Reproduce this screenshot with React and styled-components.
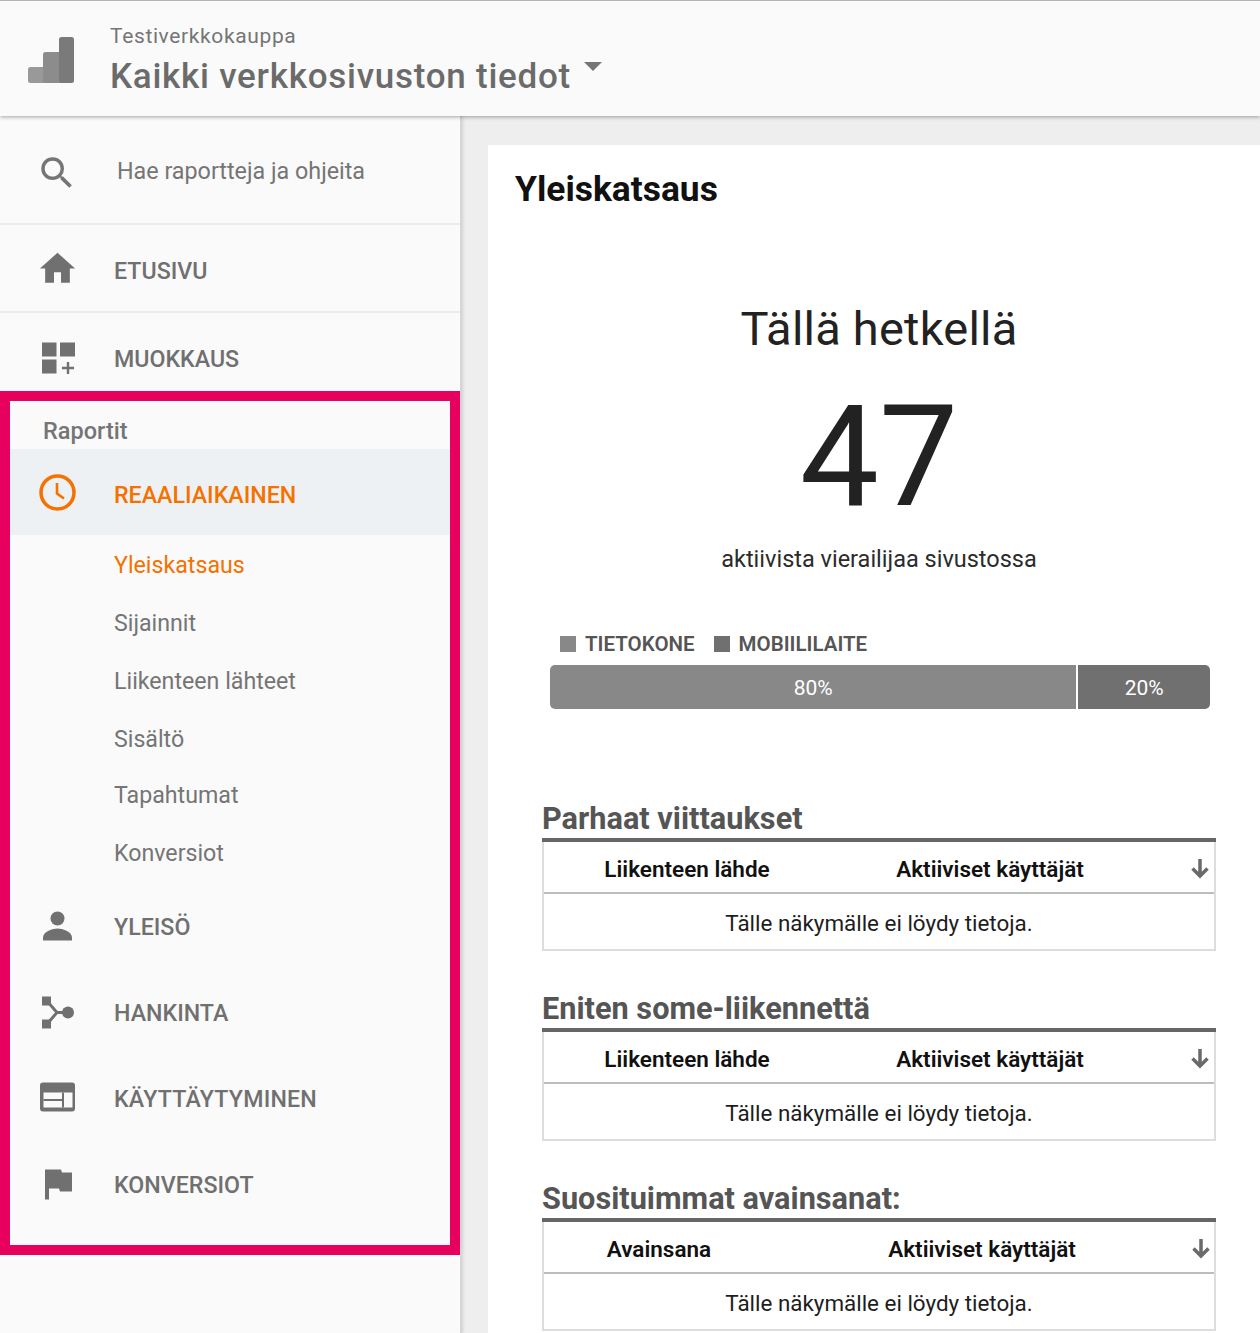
import React from "react";
import styled, { createGlobalStyle } from "styled-components";

const GlobalStyle = createGlobalStyle`
  html, body {
    margin: 0;
    height: 1333px;
    overflow: hidden;
    background: #eeeeee;
    font-family: Roboto, "Liberation Sans", sans-serif;
  }
  * { box-sizing: border-box; }
`;

const Page = styled.div`
  width: 1260px;
  height: 1333px;
  overflow: hidden;
  display: flex;
  flex-direction: column;
`;

const Header = styled.header`
  position: relative;
  z-index: 2;
  flex: 0 0 116px;
  display: flex;
  align-items: flex-start;
  padding: 0 0 0 28px;
  background: #fafafa;
  border-top: 1px solid #b4b4b4;
  box-shadow: 0 1px 4px rgba(0, 0, 0, 0.35);
`;

const LogoWrap = styled.div`
  width: 46px;
  height: 46px;
  margin-top: 36px;
  svg { display: block; }
`;

const Titles = styled.div`
  margin-left: 36px;
  padding-top: 22px;
`;

const Account = styled.div`
  font-size: 21px;
  line-height: 26px;
  letter-spacing: 0.63px;
  color: #757575;
`;

const ViewName = styled.div`
  display: flex;
  align-items: flex-start;
  margin-top: 6px;
  font-size: 35px;
  line-height: 44px;
  font-weight: 500;
  letter-spacing: 0.74px;
  color: #6b6b6b;
`;

const Caret = styled.span`
  width: 0;
  height: 0;
  margin: 7px 0 0 13px;
  border-left: 9px solid transparent;
  border-right: 9px solid transparent;
  border-top: 9px solid #757575;
`;

const Body = styled.div`
  flex: 1;
  display: flex;
  min-height: 0;
`;

const Sidebar = styled.nav`
  flex: 0 0 462px;
  background: #fafafa;
  border-right: 2px solid #d6d6d6;
  box-shadow: 1px 0 3px rgba(0, 0, 0, 0.12);
`;

const SearchRow = styled.div`
  height: 109px;
  display: flex;
  align-items: center;
  padding: 0 0 0 36px;
  border-bottom: 2px solid #ececec;
  color: #757575;
  svg { margin: 6px 39px 0 0; }
`;

const SearchText = styled.span`
  font-size: 23.3px;
  margin-top: 2px;
`;

const TopRow = styled.div`
  height: ${(p) => p.$h}px;
  display: flex;
  align-items: center;
  padding: ${(p) => p.$top}px 0 0 39px;
  border-bottom: ${(p) => (p.$line ? "2px solid #ececec" : "none")};
`;

const IconBox = styled.span`
  flex: 0 0 37px;
  width: 37px;
  height: 37px;
  margin-right: 38px;
  color: #707070;
  svg { display: block; }
`;

const RowLabel = styled.span`
  margin-top: ${(p) => (p.$active ? 5 : 3)}px;
  font-size: 23.2px;
  font-weight: 500;
  letter-spacing: ${(p) => p.$spacing || 0}px;
  color: ${(p) => (p.$active ? "#f57100" : "#707070")};
`;

const ReportBox = styled.section`
  height: 864px;
  border: 10px solid #e8005f;
  padding-top: 18px;
`;

const ReportTitle = styled.div`
  height: 30px;
  padding-left: 33px;
  font-size: 23.5px;
  font-weight: 500;
  line-height: 24px;
  color: #757575;
`;

const NavRow = styled.div`
  height: 86px;
  display: flex;
  align-items: center;
  padding-left: 29px;
  background: ${(p) => (p.$active ? "#edf1f4" : "transparent")};
`;

const SubList = styled.div`
  margin-bottom: 1px;
`;

const SubItem = styled.div`
  height: 58px;
  padding-left: 104px;
  font-size: 23.2px;
  line-height: 60px;
  color: ${(p) => (p.$active ? "#f57100" : "#757575")};
  &:nth-child(5) { margin-top: -2px; }
`;

const Main = styled.main`
  flex: 1;
  padding: 29px 0 0 26px;
  min-width: 0;
`;

const Card = styled.div`
  height: 1300px;
  background: #ffffff;
  padding: 22px 44px 0 27px;
`;

const PageTitle = styled.h1`
  margin: 0;
  font-size: 35.4px;
  line-height: 44px;
  font-weight: 700;
  color: #111111;
`;

const Now = styled.div`
  margin-top: 89px;
  margin-left: 27px;
  text-align: center;
  font-size: 47px;
  line-height: 58px;
  letter-spacing: 0.22px;
  color: #222222;
`;

const Count = styled.div`
  margin-top: 34px;
  margin-left: 27px;
  text-align: center;
  font-size: 141px;
  line-height: 130px;
  color: #222222;
`;

const Sub = styled.div`
  margin-top: 22px;
  margin-left: 27px;
  text-align: center;
  font-size: 23.5px;
  line-height: 30px;
  color: #2b2b2b;
`;

const Legend = styled.div`
  display: flex;
  gap: 19px;
  margin: 56px 0 0 45px;
`;

const LegendItem = styled.span`
  display: flex;
  align-items: center;
  font-size: 20.5px;
  line-height: 28px;
  font-weight: 600;
  color: #555555;
  &::before {
    content: "";
    width: 16px;
    height: 16px;
    margin-right: 9px;
    background: ${(p) => p.$color};
  }
`;

const Bar = styled.div`
  display: flex;
  width: 660px;
  height: 44px;
  margin: 7px 0 0 35px;
  border-radius: 5px;
  overflow: hidden;
`;

const BarPart = styled.div`
  display: flex;
  align-items: center;
  justify-content: center;
  flex: ${(p) => p.$grow};
  padding-top: 2px;
  font-size: 21px;
  color: #ffffff;
  background: ${(p) => p.$color};
  border-right: ${(p) => (p.$divider ? "2px solid #ffffff" : "none")};
`;

const Section = styled.section`
  height: 190px;
  margin-left: 27px;
`;

const Sections = styled.div`
  margin-top: 91px;
`;

const SectionTitle = styled.h2`
  margin: 0;
  height: 42px;
  font-size: 30.7px;
  line-height: 38px;
  font-weight: 700;
  color: #555555;
  border-bottom: 4px solid #666666;
`;

const Table = styled.div`
  height: 109px;
  border: 2px solid #dddddd;
  border-top: none;
`;

const HeadRow = styled.div`
  height: 52px;
  padding-top: 3px;
  display: grid;
  grid-template-columns: ${(p) => p.$cols} 1fr;
  align-items: center;
  border-bottom: 2px solid #bdbdbd;
  font-size: 22.5px;
  font-weight: 600;
  color: #111111;
`;

const HeadCell = styled.span`
  text-align: center;
`;

const SortIcon = styled.span`
  justify-self: end;
  margin: -2px 3px 0 0;
  color: #6a6a6a;
  svg { display: block; }
`;

const Empty = styled.div`
  height: 55px;
  text-align: center;
  font-size: 22.4px;
  line-height: 59px;
  color: #1d1d1d;
`;

const Glyph = ({ children, size = 37, view = "0 0 37 37" }) => (
  <svg width={size} height={size} viewBox={view} fill="currentColor">
    {children}
  </svg>
);

const Logo = () => (
  <svg width="46" height="46" viewBox="0 0 46 46">
    <rect x="0" y="30" width="24" height="16" rx="2.5" fill="#999999" />
    <rect x="15" y="15" width="20" height="31" rx="2.5" fill="#8c8c8c" />
    <rect x="31" y="0" width="15" height="46" rx="2.5" fill="#7a7a7a" />
  </svg>
);

const SearchIcon = () => (
  <svg width="42" height="42" viewBox="0 0 24 24" fill="#757575">
    <path d="M15.5 14h-.79l-.28-.27A6.47 6.47 0 0 0 16 9.5 6.5 6.5 0 1 0 9.5 16c1.61 0 3.09-.59 4.23-1.57l.27.28v.79l5 4.99L20.49 19l-4.99-5zm-6 0C7.01 14 5 11.99 5 9.5S7.01 5 9.5 5 14 7.01 14 9.5 11.99 14 9.5 14z" />
  </svg>
);

const HomeIcon = () => (
  <Glyph view="1.5 2 21 21">
    <path d="M10 20v-6h4v6h5v-8h3L12 3 2 12h3v8z" />
  </Glyph>
);

const DashIcon = () => (
  <Glyph>
    <rect x="3" y="3.5" width="14.500" height="14" />
    <rect x="21" y="3.500" width="15" height="14" />
    <rect x="3" y="20.500" width="14.500" height="14" />
    <path d="M27.800 23h2.400v4.800H35v2.400h-4.800V35h-2.400v-4.800H23v-2.400h4.800z" />
  </Glyph>
);

const ClockIcon = () => (
  <svg width="37" height="37" viewBox="0 0 37 37" fill="none" stroke="#f57100">
    <circle cx="18.500" cy="18.500" r="16.500" strokeWidth="3.500" />
    <path d="M18 9v10.500l7 5" strokeWidth="2.600" />
  </svg>
);

const PersonIcon = () => (
  <Glyph>
    <circle cx="18.500" cy="11.500" r="7" />
    <path d="M4 33.500v-3c0-6 10-9 14.500-9s14.500 3 14.500 9v3z" />
  </Glyph>
);

const SplitIcon = () => (
  <Glyph>
    <rect x="3" y="3.500" width="9" height="9" />
    <rect x="3" y="26.500" width="9" height="9" />
    <circle cx="29" cy="19.500" r="6" />
    <path d="M8 8l10 11.500L8 31M18 19.500h10" fill="none" stroke="currentColor" strokeWidth="3" />
  </Glyph>
);

const LayoutIcon = () => (
  <Glyph>
    <path
      fillRule="evenodd"
      d="M4 3.500h29a3 3 0 0 1 3 3v23a3 3 0 0 1-3 3H4a3 3 0 0 1-3-3v-23a3 3 0 0 1 3-3zM4.500 13.500v15h29v-15z"
    />
    <rect x="23" y="13.500" width="2" height="15" />
    <rect x="4.500" y="20" width="19" height="2" />
  </Glyph>
);

const FlagIcon = () => (
  <Glyph>
    <path d="M6 4.500h16l1 3h10v19H21l-1-3H10v11H6z" />
  </Glyph>
);

const ArrowDown = () => (
  <svg width="22" height="22" viewBox="0 0 22 22" fill="none" stroke="currentColor" strokeWidth="3.500">
    <path d="M11 2v16M3.500 11.500L11 19l7.500-7.500" />
  </svg>
);

const reports = ["Sijainnit", "Liikenteen lähteet", "Sisältö", "Tapahtumat", "Konversiot"];

const tables = [
  { title: "Parhaat viittaukset", first: "Liikenteen lähde", cols: "286px 320px" },
  { title: "Eniten some-liikennettä", first: "Liikenteen lähde", cols: "286px 320px" },
  { title: "Suosituimmat avainsanat:", first: "Avainsana", cols: "230px 416px" },
];

export default function App() {
  return (
    <Page>
      <GlobalStyle />
      <Header>
        <LogoWrap>
          <Logo />
        </LogoWrap>
        <Titles>
          <Account>Testiverkkokauppa</Account>
          <ViewName>
            Kaikki verkkosivuston tiedot
            <Caret />
          </ViewName>
        </Titles>
      </Header>
      <Body>
        <Sidebar>
          <SearchRow>
            <SearchIcon />
            <SearchText>Hae raportteja ja ohjeita</SearchText>
          </SearchRow>
          <TopRow $h={88} $top={2} $line>
            <IconBox>
              <HomeIcon />
            </IconBox>
            <RowLabel>ETUSIVU</RowLabel>
          </TopRow>
          <TopRow $h={78} $top={10}>
            <IconBox>
              <DashIcon />
            </IconBox>
            <RowLabel>MUOKKAUS</RowLabel>
          </TopRow>
          <ReportBox>
            <ReportTitle>Raportit</ReportTitle>
            <NavRow $active>
              <IconBox>
                <ClockIcon />
              </IconBox>
              <RowLabel $active>REAALIAIKAINEN</RowLabel>
            </NavRow>
            <SubList>
              <SubItem $active>Yleiskatsaus</SubItem>
              {reports.map((r) => (
                <SubItem key={r}>{r}</SubItem>
              ))}
            </SubList>
            <NavRow>
              <IconBox>
                <PersonIcon />
              </IconBox>
              <RowLabel>YLEISÖ</RowLabel>
            </NavRow>
            <NavRow>
              <IconBox>
                <SplitIcon />
              </IconBox>
              <RowLabel>HANKINTA</RowLabel>
            </NavRow>
            <NavRow>
              <IconBox>
                <LayoutIcon />
              </IconBox>
              <RowLabel $spacing={0.2}>KÄYTTÄYTYMINEN</RowLabel>
            </NavRow>
            <NavRow>
              <IconBox>
                <FlagIcon />
              </IconBox>
              <RowLabel>KONVERSIOT</RowLabel>
            </NavRow>
          </ReportBox>
        </Sidebar>
        <Main>
          <Card>
            <PageTitle>Yleiskatsaus</PageTitle>
            <Now>Tällä hetkellä</Now>
            <Count>47</Count>
            <Sub>aktiivista vierailijaa sivustossa</Sub>
            <Legend>
              <LegendItem $color="#888888">TIETOKONE</LegendItem>
              <LegendItem $color="#707070">MOBIILILAITE</LegendItem>
            </Legend>
            <Bar>
              <BarPart $grow="528" $color="#888888" $divider>
                80%
              </BarPart>
              <BarPart $grow="132" $color="#707070">
                20%
              </BarPart>
            </Bar>
            <Sections>
              {tables.map((t) => (
                <Section key={t.title}>
                  <SectionTitle>{t.title}</SectionTitle>
                  <Table>
                    <HeadRow $cols={t.cols}>
                      <HeadCell>{t.first}</HeadCell>
                      <HeadCell>Aktiiviset käyttäjät</HeadCell>
                      <SortIcon>
                        <ArrowDown />
                      </SortIcon>
                    </HeadRow>
                    <Empty>Tälle näkymälle ei löydy tietoja.</Empty>
                  </Table>
                </Section>
              ))}
            </Sections>
          </Card>
        </Main>
      </Body>
    </Page>
  );
}
